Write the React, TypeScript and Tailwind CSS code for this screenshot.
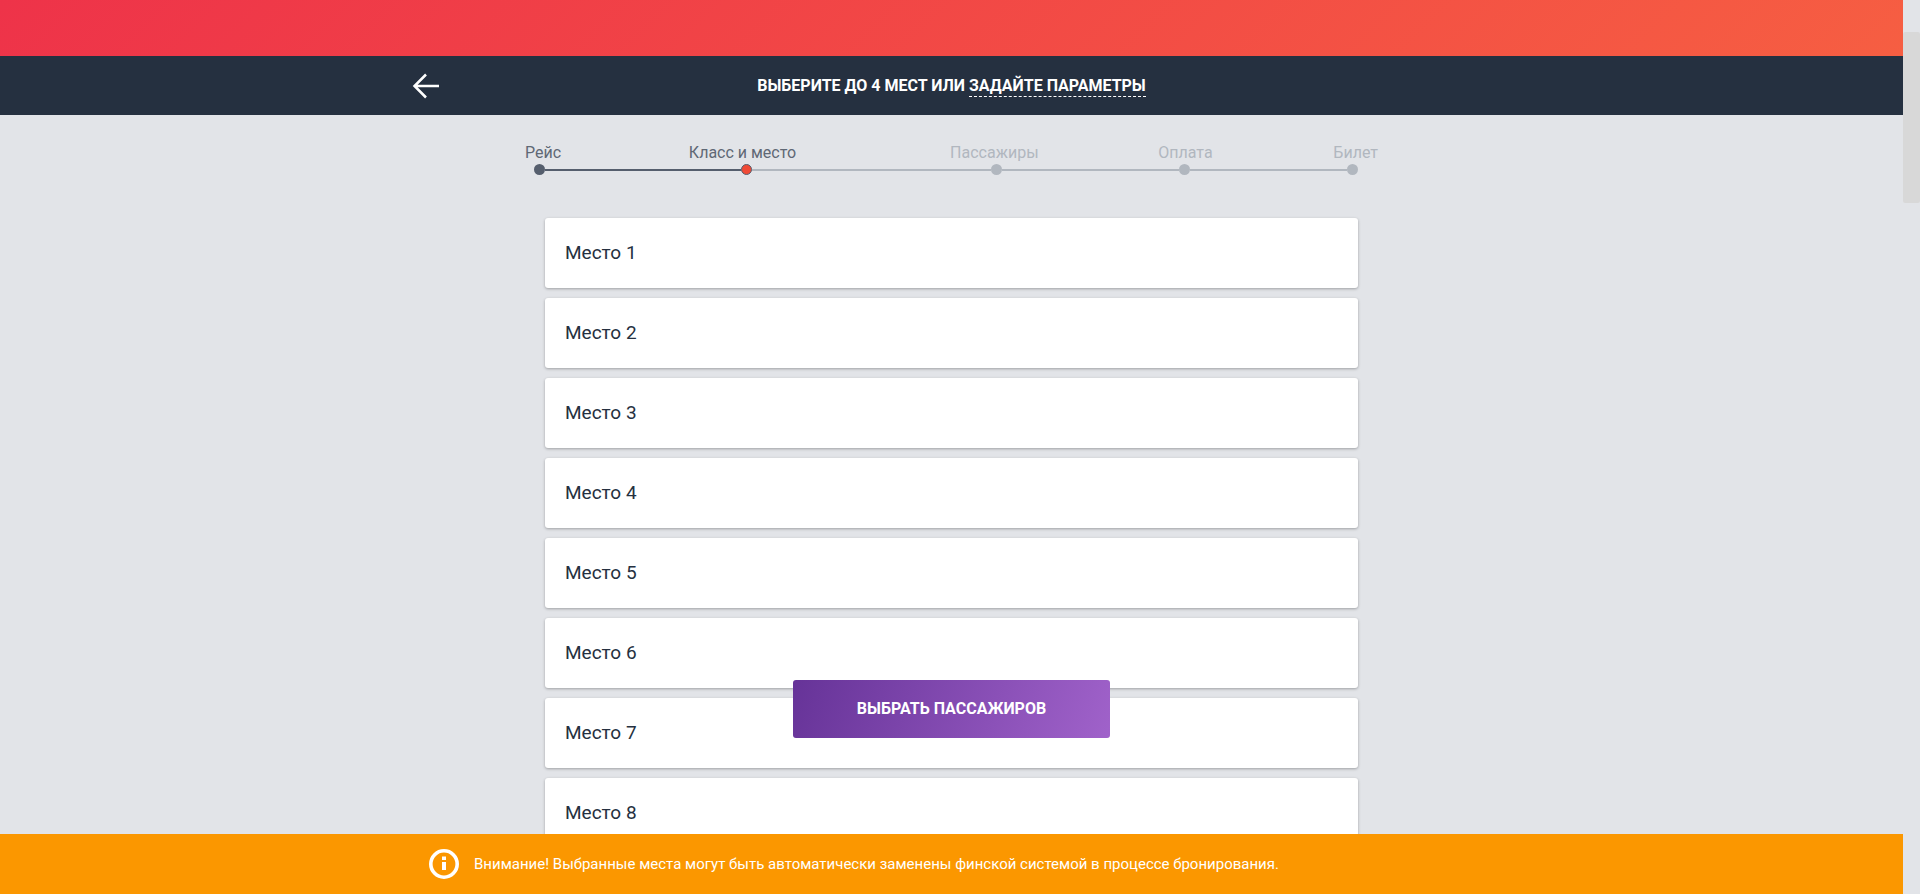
import { Fragment } from "react";

type Step = { label: string; state: "done" | "current" | "next" };

const steps: Step[] = [
  { label: "Рейс", state: "done" },
  { label: "Класс и место", state: "current" },
  { label: "Пассажиры", state: "next" },
  { label: "Оплата", state: "next" },
  { label: "Билет", state: "next" },
];

const labelGaps = ["grow-[127]", "grow-[153]", "grow-[119]", "grow-[120]"];
const lineGaps = ["grow-[196]", "grow-[239]", "grow-[177]", "grow-[157]"];

const dotStyle = {
  done: "bg-[#555e6d]",
  current: "border border-[#555e6d] bg-[#f04a36]",
  next: "bg-[#b1b7bf]",
};

const seats = Array.from({ length: 8 }, (_, i) => i + 1);

function Stepper() {
  return (
    <nav aria-label="Этапы покупки" className="mx-auto w-full max-w-[853px] pt-[27px]">
      <ol className="flex h-[22px] text-[16px] leading-[22px]">
        {steps.map((s, i) => (
          <Fragment key={s.label}>
            <li
              aria-current={s.state === "current" ? "step" : undefined}
              className={s.state === "next" ? "text-[#b1b7bf]" : "text-[#5f6875]"}
            >
              {s.label}
            </li>
            {i < labelGaps.length && <li aria-hidden="true" className={labelGaps[i]} />}
          </Fragment>
        ))}
      </ol>
      <div className="flex items-center pr-5 pl-[9px]">
        {steps.map((s, i) => (
          <Fragment key={s.label}>
            <span className={`size-[11px] shrink-0 rounded-full ${dotStyle[s.state]}`} />
            {i < lineGaps.length && (
              <span
                className={`h-[2px] basis-0 ${lineGaps[i]} ${i === 0 ? "bg-[#555e6d]" : "bg-[#b1b7bf]"}`}
              />
            )}
          </Fragment>
        ))}
      </div>
    </nav>
  );
}

export default function App() {
  return (
    <div className="flex h-screen overflow-hidden bg-[#e2e4e8] font-[Roboto,'Noto_Sans',sans-serif]">
      <div className="relative flex min-w-0 flex-1 flex-col">
        <div className="h-14 shrink-0 bg-linear-[135deg] from-[#ee3349] to-[#f65e42]" />

        <header className="shrink-0 bg-[#253040] text-white">
          <div className="mx-auto grid h-[59px] w-full max-w-[1079px] grid-cols-[1fr_auto_1fr] items-center">
            <button type="button" aria-label="Назад" className="w-fit">
              <svg width="28" height="26" viewBox="0 0 28 26" fill="none" stroke="currentColor" strokeWidth="2.5">
                <path d="M14 1.5 2.5 13 14 24.5M2.5 13H27" />
              </svg>
            </button>
            <h1 className="text-[16px] leading-5 font-bold uppercase">
              Выберите до 4 мест или{" "}
              <a href="#parameters" className="border-b border-dashed border-white pb-px">
                задайте параметры
              </a>
            </h1>
          </div>
        </header>

        <main className="min-h-0 flex-1 overflow-y-auto [scrollbar-width:none]">
          <Stepper />
          <ul className="mx-auto mt-[43px] flex w-full max-w-[813px] flex-col gap-[10px]">
            {seats.map((n) => (
              <li
                key={n}
                className="flex h-[70px] shrink-0 items-center rounded-[3px] bg-white px-5 text-[19px] text-[#253040] shadow-[0_1px_3px_rgba(0,0,0,0.3)]"
              >
                Место {n}
              </li>
            ))}
          </ul>
        </main>

        <div className="pointer-events-none absolute inset-x-0 bottom-[156px] flex justify-center">
          <button
            type="button"
            className="pointer-events-auto h-[58px] w-[317px] rounded-[3px] bg-linear-[110deg] from-[#663398] to-[#a062ca] text-[16px] font-bold text-white uppercase"
          >
            Выбрать пассажиров
          </button>
        </div>

        <footer className="shrink-0 bg-[#fb9700] text-white">
          <div className="mx-auto flex h-[60px] w-full max-w-[1045px] items-center gap-[15px]">
            <svg width="30" height="30" viewBox="0 0 30 30" aria-hidden="true">
              <circle cx="15" cy="15" r="13.2" fill="none" stroke="currentColor" strokeWidth="3.6" />
              <path fill="currentColor" d="M13 7.5h4v3.5h-4zM13 13h4v8h-4z" />
            </svg>
            <p className="text-[15px]">
              Внимание! Выбранные места могут быть автоматически заменены финской системой в процессе
              бронирования.
            </p>
          </div>
        </footer>
      </div>

      <div aria-hidden="true" className="w-[17px] shrink-0 pt-8">
        <div className="h-[171px] rounded-[2px] bg-[#d8d8d8]" />
      </div>
    </div>
  );
}
